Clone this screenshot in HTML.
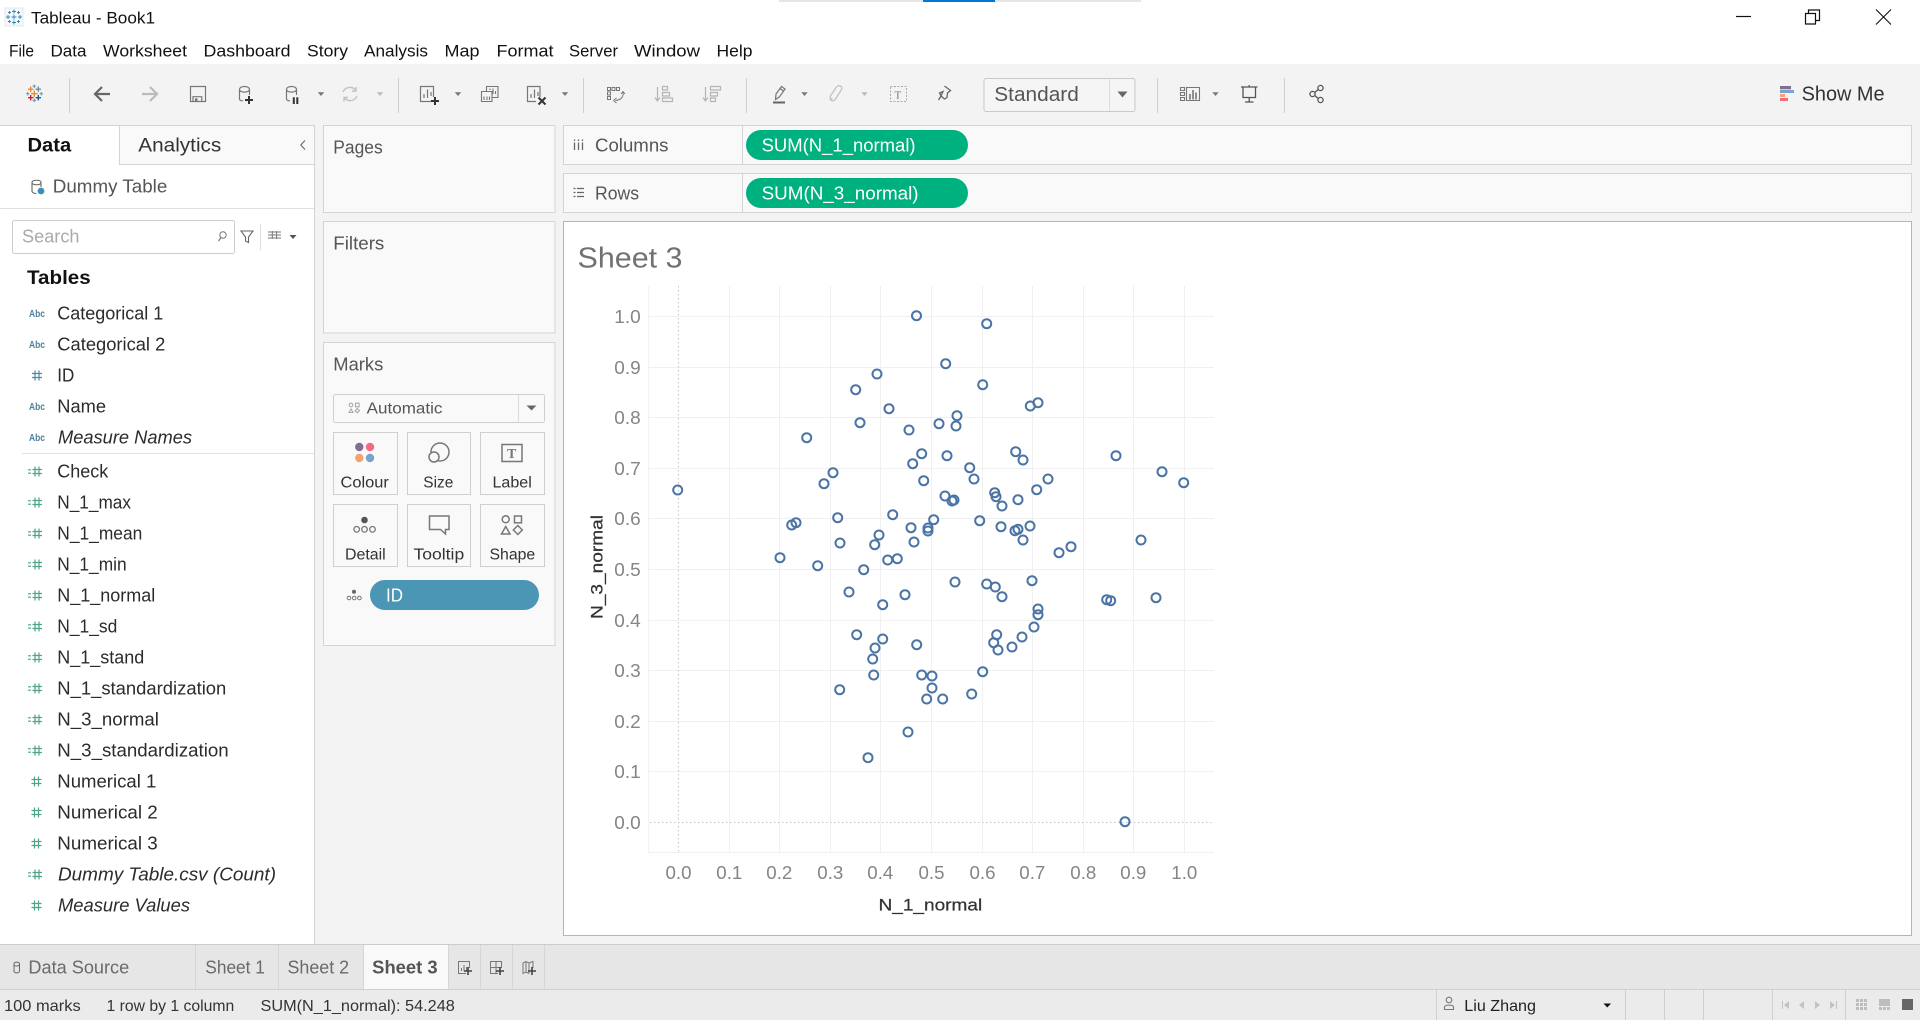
<!DOCTYPE html>
<html lang="en">
<head>
<meta charset="utf-8">
<title>Tableau - Book1</title>
<style>
html,body{margin:0;padding:0;width:1920px;height:1020px;overflow:hidden;background:#f3f3f3}
svg{display:block}
text{font-family:"Liberation Sans",Arial,sans-serif;white-space:pre}
.m{font-size:17px;fill:#111}
.f{font-size:18px;fill:#2b2b2b}
.s{font-size:18px;fill:#555}
.c{font-size:15.5px;fill:#333}
.a{font-size:10.5px;font-weight:bold;fill:#4f7f99}
.t{font-size:18px;fill:#858585}
.st{font-size:16px;fill:#333}
.w{font-size:18px;fill:#fff}
.tab{font-size:18px;fill:#6a6a6a}
.g line{stroke:#f0f0f0;stroke-width:1}
.mk circle{fill:none;stroke:#4a74a5;stroke-width:2;r:4.5px}
</style>
</head>
<body>
<svg width="1920" height="1020" viewBox="0 0 1920 1020" xmlns="http://www.w3.org/2000/svg">
<defs>
<g id="dim"><path d="M4.500 -5V5M8.500 -5V5M1.500 -2H11.500M1.500 2H11.500" fill="none" stroke="#4a8aa6" stroke-width="1.200"/></g>
<g id="mea"><path d="M0 -1.700H3M0 1.700H3" fill="none" stroke="#4fa38a" stroke-width="1.100"/><path d="M7 -5V5M11 -5V5M4.500 -2H14M4.500 2H14" fill="none" stroke="#4fa38a" stroke-width="1.200"/></g>
<g id="hash"><path d="M4.500 -5V5M8.500 -5V5M1.500 -2H11.500M1.500 2H11.500" fill="none" stroke="#4fa38a" stroke-width="1.200"/></g>
<path id="dn" d="M-3.200 -1.800H3.200L0 2Z" fill="#777"/>
</defs>

<!-- title bar -->
<rect width="1920" height="64" fill="#fff"/>
<rect x="779" y="0" width="362" height="2" fill="#e6e6e6"/>
<rect x="923" y="0" width="72" height="2" fill="#0078d7"/>
<rect x="5" y="8" width="18" height="18" fill="#f4f8fb" stroke="#e3e7ea" stroke-width="1"/>
<path d="M14 9.500v4M12 11.500h4M14 20.500v4M12 22.500h4M8 15v4M6 17h4M20 15v4M18 17h4M14 14.500v5M11.500 17h5M9.500 11v3M8 12.500h3M18.500 11v3M17 12.500h3M9.500 20v3M8 21.500h3M18.500 20v3M17 21.500h3" stroke="#3c87b4" stroke-width="1" fill="none"/>
<text x="31" y="23.500" font-size="17" fill="#111" textLength="124" lengthAdjust="spacingAndGlyphs">Tableau - Book1</text>
<text class="m" x="9" y="56.500" textLength="25" lengthAdjust="spacingAndGlyphs">File</text>
<text class="m" x="50.500" y="56.500" textLength="36" lengthAdjust="spacingAndGlyphs">Data</text>
<text class="m" x="103" y="56.500" textLength="84" lengthAdjust="spacingAndGlyphs">Worksheet</text>
<text class="m" x="203.500" y="56.500" textLength="87" lengthAdjust="spacingAndGlyphs">Dashboard</text>
<text class="m" x="307" y="56.500" textLength="41" lengthAdjust="spacingAndGlyphs">Story</text>
<text class="m" x="364" y="56.500" textLength="64" lengthAdjust="spacingAndGlyphs">Analysis</text>
<text class="m" x="444.500" y="56.500" textLength="35" lengthAdjust="spacingAndGlyphs">Map</text>
<text class="m" x="496.500" y="56.500" textLength="57" lengthAdjust="spacingAndGlyphs">Format</text>
<text class="m" x="569" y="56.500" textLength="49" lengthAdjust="spacingAndGlyphs">Server</text>
<text class="m" x="634" y="56.500" textLength="66" lengthAdjust="spacingAndGlyphs">Window</text>
<text class="m" x="716.500" y="56.500" textLength="36" lengthAdjust="spacingAndGlyphs">Help</text>
<path d="M1736 16.500H1751" stroke="#111" stroke-width="1.200"/>
<path d="M1805.500 13.500H1815.500V24H1805.500ZM1808.500 13.500V10H1819.500V20.500H1815.500" fill="none" stroke="#111" stroke-width="1.200"/>
<path d="M1876 9.500L1891 24.500M1891 9.500L1876 24.500" stroke="#111" stroke-width="1.100"/>

<!-- toolbar -->
<rect y="64" width="1920" height="62" fill="#f3f3f3"/>
<g fill="none" stroke-width="1.200">
<path d="M34.300 84.500v3.500M32.500 86.200h3.600M27.700 92v3.500M26 93.700h3.500M41.300 92v3.500M39.500 93.700h3.500M34.300 98.700v3.500M32.500 100.400h3.600" stroke="#7b9fb5"/>
<path d="M30.700 86.500v5.400M28 89.200h5.400" stroke="#ee8c2b" stroke-width="1.400"/>
<path d="M38.300 86.500v5.400M35.600 89.200h5.400" stroke="#5b95a6" stroke-width="1.400"/>
<path d="M34.300 90.500v6.500M31 93.700h6.600" stroke="#ee8c2b" stroke-width="1.400"/>
<path d="M30.700 95v5.400M28 97.700h5.400" stroke="#c8203f" stroke-width="1.400"/>
<path d="M38.300 95v5.400M35.600 97.700h5.400" stroke="#1f5a96" stroke-width="1.400"/>
</g>
<path d="M69.500 78V113M398.500 78V113M583.500 78V113M746.500 78V113M1157.500 78V113M1284.500 78V113" stroke="#d0d0d0" stroke-width="1"/>
<path d="M110 94H95.500M102 87L95 94L102 101" fill="none" stroke="#666" stroke-width="2.200"/>
<path d="M142 94H157M150 87L157 94L150 101" fill="none" stroke="#bbb" stroke-width="2.200"/>
<path d="M190.500 86.500H205.500V101.500H190.500ZM193 101.500V96.700H201.700V101.500" fill="none" stroke="#777" stroke-width="1.200"/>
<rect x="195" y="98.300" width="2.500" height="3.200" fill="#777"/>
<g fill="none" stroke="#777" stroke-width="1.200">
<path d="M239.500 89.500C239.500 85.500 249.500 85.500 249.500 89.500C249.500 93 239.500 93 239.500 89.500V99C239.500 100.200 241 100.800 243 100.800M249.500 89.500V95"/>
<path d="M286.500 89.500C286.500 85.500 296.500 85.500 296.500 89.500C296.500 93 286.500 93 286.500 89.500V99C286.500 100.200 288 100.800 290 100.800M296.500 89.500V95"/>
</g>
<path d="M249 96V104M245 100H253" stroke="#333" stroke-width="2" fill="none"/>
<path d="M293.800 97.300V104M297.300 97.300V104" stroke="#333" stroke-width="2" fill="none"/>
<use href="#dn" x="321" y="94"/>
<path d="M343 92A7.500 7.500 0 0 1 356 90.500M356 87V91H352M357 96A7.500 7.500 0 0 1 344 97.500M344 101.500V97.500H348" fill="none" stroke="#c2c2c2" stroke-width="1.400"/>
<path d="M-3.200 -1.800H3.200L0 2Z" transform="translate(380,94)" fill="#bbb"/>
<g fill="none" stroke="#777" stroke-width="1.200">
<path d="M433.500 97V86.500H420.500V101.500H431"/>
<path d="M424 98V94M427.500 98V89.500M431 96V92"/>
</g>
<path d="M435 97V105M431 101H439" stroke="#333" stroke-width="2" fill="none"/>
<use href="#dn" x="458" y="94"/>
<g fill="none" stroke="#777" stroke-width="1.100">
<path d="M486.500 91V86.500H498V97.500H492"/>
<path d="M481.500 91.500H492V101.500H481.500Z"/>
<path d="M490 90V88.500M493 94V88.500M495.500 94V91M484 100V96.500M487 100V96.500M489.500 100V96.500"/>
</g>
<g fill="none" stroke="#777" stroke-width="1.200">
<path d="M540 97V86.500H527.500V101.500H536"/>
<path d="M531 98V94M534.500 98V89.500M538 96V92"/>
</g>
<path d="M538.500 97.500L545.500 104.500M545.500 97.500L538.500 104.500" stroke="#333" stroke-width="2" fill="none"/>
<use href="#dn" x="565" y="94"/>
<g fill="none" stroke="#777" stroke-width="1">
<path d="M607.500 87.500h3v3h-3zM612 87.500h3v3h-3zM616.500 87.500h3v3h-3zM607.500 92h3v3h-3zM607.500 96.500h3v3h-3z"/>
<path d="M623 92C624 96.500 621 100 615.500 100.500M613.500 100.500L616.500 98M613.500 100.500L616.500 103M621 94L623 91.500L625 94"/>
</g>
<g fill="none" stroke="#b5b5b5" stroke-width="1.200">
<path d="M657.500 87V100M655 97.500L657.500 101L660 97.500" />
<path d="M662.500 86.500h5v3.500h-5zM662.500 92.500h7v3.500h-7zM662.500 98h10v3.500h-10z"/>
<path d="M705.500 87V100M703 97.500L705.500 101L708 97.500"/>
<path d="M710.500 86.500h10v3.500h-10zM710.500 92.500h7v3.500h-7zM710.500 98h5v3.500h-5z"/>
</g>
<path d="M776 94L781.500 86.500L785 89L779.500 96.800L775.500 99.500ZM780 88.500L783.500 91" fill="none" stroke="#777" stroke-width="1.200"/>
<rect x="773" y="101.500" width="12" height="2" fill="#666"/>
<use href="#dn" x="804.500" y="94"/>
<path d="M832.500 98C830 101 829.500 98 831 95L836.500 87C838.500 84.500 843 86 841.500 89.500L835.500 99C833.500 102 830 101 830.500 98" fill="none" stroke="#c2c2c2" stroke-width="1.300"/>
<path d="M-3.200 -1.800H3.200L0 2Z" transform="translate(864.500,94)" fill="#bbb"/>
<rect x="890.500" y="86.500" width="16" height="15" fill="none" stroke="#aaa" stroke-width="1" stroke-dasharray="2 1.500"/>
<text x="894.500" y="98.500" font-size="11" fill="#777" style="font-family:'Liberation Serif',serif">T</text>
<path d="M944.500 86L950.500 90.500L947.500 93L947 97.500L944.500 99L941 96L938.500 100M941 96L939.500 93L943 91.500Z" fill="none" stroke="#666" stroke-width="1.300"/>
<rect x="984" y="78.500" width="151" height="33" rx="2" fill="#f5f5f5" stroke="#c9c9c9"/>
<path d="M1109.500 79V111" stroke="#dcdcdc"/>
<path d="M1117.500 91.500H1127.500L1122.500 97.500Z" fill="#666"/>
<text x="994.300" y="101" font-size="20" fill="#555" textLength="84.500" lengthAdjust="spacingAndGlyphs">Standard</text>
<g fill="none" stroke="#777" stroke-width="1.100">
<path d="M1180.500 87.500h4v3h-4zM1180.500 92.500h4v3h-4zM1180.500 97.500h4v3h-4zM1186.500 87.500h13v13h-13z"/>
</g>
<path d="M1190 99.500V94M1193 99.500V90M1196 99.500V92.500" stroke="#666" stroke-width="1.400" fill="none"/>
<use href="#dn" x="1215.500" y="94"/>
<path d="M1241 87H1257.500M1243 87V97.500H1255.500V87M1249.200 97.500V102M1245 102H1253.500M1249.200 85V87" fill="none" stroke="#555" stroke-width="1.300"/>
<g fill="none" stroke="#555" stroke-width="1.300">
<circle cx="1320.500" cy="88" r="2.600"/><circle cx="1312.500" cy="94" r="2.600"/><circle cx="1320.500" cy="100" r="2.600"/>
<path d="M1318.300 89.500L1314.700 92.500M1314.700 95.500L1318.300 98.500"/>
</g>
<rect x="1780" y="86" width="11" height="3.300" fill="#826d93"/>
<rect x="1780" y="90" width="14" height="3" fill="#7ba2cc"/>
<rect x="1780" y="94" width="5" height="3" fill="#f2a372"/>
<rect x="1780" y="98" width="8" height="3" fill="#f56a7e"/>
<text x="1801.600" y="100.500" font-size="20" fill="#333" textLength="83" lengthAdjust="spacingAndGlyphs">Show Me</text>

<!-- left data pane -->
<rect x="0" y="125" width="314" height="820" fill="#fff"/>
<rect x="120" y="125" width="194" height="40" fill="#f9f9f9"/>
<path d="M0 125.500H314.500V945M119.500 125V164.500H314" fill="none" stroke="#d4d4d4"/>
<text x="27.500" y="151.500" font-size="19" font-weight="bold" fill="#111" textLength="43.700" lengthAdjust="spacingAndGlyphs">Data</text>
<text x="138.300" y="151.500" font-size="19" fill="#333" textLength="83" lengthAdjust="spacingAndGlyphs">Analytics</text>
<path d="M305 140.500L300.800 145L305 149.500" fill="none" stroke="#666" stroke-width="1.100"/>
<path d="M32 182.500C32 179.500 41 179.500 41 182.500C41 185.500 32 185.500 32 182.500V191C32 192.500 34 193.500 36.500 193.500M41 182.500V187" fill="none" stroke="#666" stroke-width="1.100"/>
<circle cx="41" cy="191" r="3.400" fill="#3d8fb8"/>
<text x="52.800" y="192.500" style="font-size:18px;fill:#555" textLength="114.500" lengthAdjust="spacingAndGlyphs">Dummy Table</text>
<path d="M0 208.500H314" stroke="#e0e0e0"/>
<rect x="12.500" y="220.500" width="222" height="33" rx="2" fill="#fff" stroke="#ccc"/>
<text x="22" y="242.500" font-size="18" fill="#aaa" textLength="57.500" lengthAdjust="spacingAndGlyphs">Search</text>
<circle cx="223" cy="235" r="3.200" fill="none" stroke="#777"/>
<path d="M221 237.500L218.500 241" stroke="#777" stroke-width="1.200"/>
<path d="M241 231H253L248.500 237V242.500L245.500 241V237Z" fill="none" stroke="#666" stroke-width="1.100"/>
<path d="M260.500 224V250" stroke="#ddd"/>
<path d="M268 232h13M268 235h13M268 238h13M272.300 231v8M276.600 231v8" stroke="#777" stroke-width="1" fill="none"/>
<path d="M289.500 235H296.500L293 239Z" fill="#555"/>
<text x="27" y="284" font-size="19" font-weight="bold" fill="#111" textLength="63.700" lengthAdjust="spacingAndGlyphs">Tables</text>

<text class="a" x="29" y="317" textLength="16" lengthAdjust="spacingAndGlyphs">Abc</text>
<text class="f" x="57.300" y="319.500" textLength="106" lengthAdjust="spacingAndGlyphs">Categorical 1</text>
<text class="a" x="29" y="348" textLength="16" lengthAdjust="spacingAndGlyphs">Abc</text>
<text class="f" x="57.300" y="350.500" textLength="108" lengthAdjust="spacingAndGlyphs">Categorical 2</text>
<use href="#dim" x="30.500" y="375.500"/>
<text class="f" x="57.300" y="381.500" textLength="17" lengthAdjust="spacingAndGlyphs">ID</text>
<text class="a" x="29" y="410" textLength="16" lengthAdjust="spacingAndGlyphs">Abc</text>
<text class="f" x="57.300" y="412.500" textLength="48.700" lengthAdjust="spacingAndGlyphs">Name</text>
<text class="a" x="29" y="441" textLength="16" lengthAdjust="spacingAndGlyphs">Abc</text>
<text class="f" x="58" y="443.500" font-style="italic" textLength="134" lengthAdjust="spacingAndGlyphs">Measure Names</text>
<path d="M22 453.500H314" stroke="#e0e0e0"/>
<use href="#mea" x="28" y="471.500"/>
<text class="f" x="57.300" y="477.500" textLength="51" lengthAdjust="spacingAndGlyphs">Check</text>
<use href="#mea" x="28" y="502.500"/>
<text class="f" x="57.300" y="508.500" textLength="73.700" lengthAdjust="spacingAndGlyphs">N_1_max</text>
<use href="#mea" x="28" y="533.500"/>
<text class="f" x="57.300" y="539.500" textLength="85" lengthAdjust="spacingAndGlyphs">N_1_mean</text>
<use href="#mea" x="28" y="564.500"/>
<text class="f" x="57.300" y="570.500" textLength="69.300" lengthAdjust="spacingAndGlyphs">N_1_min</text>
<use href="#mea" x="28" y="595.500"/>
<text class="f" x="57.300" y="601.500" textLength="98" lengthAdjust="spacingAndGlyphs">N_1_normal</text>
<use href="#mea" x="28" y="626.500"/>
<text class="f" x="57.300" y="632.500" textLength="60" lengthAdjust="spacingAndGlyphs">N_1_sd</text>
<use href="#mea" x="28" y="657.500"/>
<text class="f" x="57.300" y="663.500" textLength="87" lengthAdjust="spacingAndGlyphs">N_1_stand</text>
<use href="#mea" x="28" y="688.500"/>
<text class="f" x="57.300" y="694.500" textLength="169" lengthAdjust="spacingAndGlyphs">N_1_standardization</text>
<use href="#mea" x="28" y="719.500"/>
<text class="f" x="57.300" y="725.500" textLength="101.600" lengthAdjust="spacingAndGlyphs">N_3_normal</text>
<use href="#mea" x="28" y="750.500"/>
<text class="f" x="57.300" y="756.500" textLength="171.400" lengthAdjust="spacingAndGlyphs">N_3_standardization</text>
<use href="#hash" x="30" y="781.500"/>
<text class="f" x="57.300" y="787.500" textLength="99" lengthAdjust="spacingAndGlyphs">Numerical 1</text>
<use href="#hash" x="30" y="812.500"/>
<text class="f" x="57.300" y="818.500" textLength="100.400" lengthAdjust="spacingAndGlyphs">Numerical 2</text>
<use href="#hash" x="30" y="843.500"/>
<text class="f" x="57.300" y="849.500" textLength="100.400" lengthAdjust="spacingAndGlyphs">Numerical 3</text>
<use href="#mea" x="28" y="874.500"/>
<text class="f" x="58" y="880.500" font-style="italic" textLength="218" lengthAdjust="spacingAndGlyphs">Dummy Table.csv (Count)</text>
<use href="#hash" x="30" y="905.500"/>
<text class="f" x="58" y="911.500" font-style="italic" textLength="132" lengthAdjust="spacingAndGlyphs">Measure Values</text>

<!-- pages / filters / marks -->
<rect x="323.500" y="125.500" width="231.500" height="87" fill="#f9f9f9" stroke="#d4d4d4"/>
<text class="s" x="333.300" y="153.500" textLength="49.400" lengthAdjust="spacingAndGlyphs">Pages</text>
<rect x="323.500" y="221.500" width="231.500" height="111.500" fill="#f9f9f9" stroke="#d4d4d4"/>
<text class="s" x="333.300" y="249.500" textLength="51" lengthAdjust="spacingAndGlyphs">Filters</text>
<rect x="323.500" y="342.500" width="231.500" height="303" fill="#f9f9f9" stroke="#d4d4d4"/>
<text class="s" x="333.300" y="370.500" textLength="50" lengthAdjust="spacingAndGlyphs">Marks</text>
<rect x="333.500" y="394.500" width="211" height="28" rx="2" fill="#f9f9f9" stroke="#cfcfcf"/>
<path d="M518.500 395V422" stroke="#dcdcdc"/>
<path d="M526.500 405.500H536.500L531.500 410.500Z" fill="#666"/>
<g fill="none" stroke="#aaa" stroke-width="1.100">
<circle cx="351" cy="405" r="1.800"/><rect x="355.500" y="403.200" width="3.600" height="3.600"/>
<path d="M351 409L353 412.500H349ZM357.300 408.500L359.500 410.700L357.300 412.900L355.100 410.700Z"/>
</g>
<text x="366.700" y="413.500" font-size="15.500" fill="#555" textLength="75.700" lengthAdjust="spacingAndGlyphs">Automatic</text>

<g fill="#f9f9f9" stroke="#cfcfcf">
<rect x="333.500" y="432.500" width="64" height="62"/><rect x="407.500" y="432.500" width="63" height="62"/><rect x="480.500" y="432.500" width="64" height="62"/>
<rect x="333.500" y="504.500" width="64" height="62"/><rect x="407.500" y="504.500" width="63" height="62"/><rect x="480.500" y="504.500" width="64" height="62"/>
</g>
<circle cx="359.300" cy="447" r="4.200" fill="#826d93"/><circle cx="370" cy="447" r="4.200" fill="#f56a7e"/>
<circle cx="359.300" cy="458" r="4.200" fill="#f2a372"/><circle cx="370" cy="458" r="4.200" fill="#7ba2cc"/>
<text class="c" x="340.500" y="487.500" textLength="48.300" lengthAdjust="spacingAndGlyphs">Colour</text>
<circle cx="440" cy="452" r="9" fill="none" stroke="#777" stroke-width="1.500"/>
<circle cx="434" cy="457" r="5" fill="#f9f9f9" stroke="#777" stroke-width="1.500"/>
<text class="c" x="423.300" y="487.500" textLength="30" lengthAdjust="spacingAndGlyphs">Size</text>
<rect x="502" y="444.500" width="20" height="17" fill="none" stroke="#777" stroke-width="1.500"/>
<text x="507" y="458" font-size="14" font-weight="bold" fill="#777" style="font-family:'Liberation Serif',serif">T</text>
<text class="c" x="492.500" y="487.500" textLength="39.300" lengthAdjust="spacingAndGlyphs">Label</text>
<circle cx="364.500" cy="520" r="3.300" fill="#555"/>
<g fill="none" stroke="#777" stroke-width="1.300"><circle cx="356.700" cy="529.300" r="2.800"/><circle cx="364.500" cy="529.300" r="2.800"/><circle cx="372.500" cy="529.300" r="2.800"/></g>
<text class="c" x="345" y="559.500" textLength="40.700" lengthAdjust="spacingAndGlyphs">Detail</text>
<path d="M429.500 516H449V529.500H445.500V534L440.500 529.500H429.500Z" fill="none" stroke="#777" stroke-width="1.500"/>
<text class="c" x="413.500" y="559.500" textLength="50.700" lengthAdjust="spacingAndGlyphs">Tooltip</text>
<g fill="none" stroke="#777" stroke-width="1.500">
<circle cx="505.700" cy="519.300" r="3.500"/><rect x="514.500" y="516" width="7" height="6.800"/>
<path d="M505.700 526.500L510 534H501.500ZM517.800 525.500L522.300 530L517.800 534.500L513.300 530Z"/>
</g>
<text class="c" x="489.500" y="559.500" textLength="45.700" lengthAdjust="spacingAndGlyphs">Shape</text>
<circle cx="354" cy="591.700" r="2" fill="#666"/>
<g fill="none" stroke="#777" stroke-width="1"><circle cx="349" cy="598" r="1.800"/><circle cx="354.200" cy="598" r="1.800"/><circle cx="359.400" cy="598" r="1.800"/></g>
<rect x="370" y="580" width="169" height="30" rx="15" fill="#4b96b4"/>
<text class="w" x="386" y="601.500" textLength="17" lengthAdjust="spacingAndGlyphs">ID</text>

<!-- shelves -->
<rect x="563.500" y="125.500" width="1348" height="39" fill="#f9f9f9" stroke="#d4d4d4"/>
<path d="M742.500 126V164" stroke="#d4d4d4"/>
<path d="M574.500 142.500V150M578.500 142.500V150M582.500 142.500V150" stroke="#666" stroke-width="1.300"/>
<path d="M574.500 139.500V141M578.500 139.500V141M582.500 139.500V141" stroke="#666" stroke-width="1.300"/>
<text class="s" x="595" y="151.500" textLength="73.500" lengthAdjust="spacingAndGlyphs">Columns</text>
<rect x="746" y="130" width="222" height="30" rx="15" fill="#00b180"/>
<text class="w" x="761.600" y="151.500" textLength="154" lengthAdjust="spacingAndGlyphs">SUM(N_1_normal)</text>
<rect x="563.500" y="173.500" width="1348" height="39" fill="#f9f9f9" stroke="#d4d4d4"/>
<path d="M742.500 174V212" stroke="#d4d4d4"/>
<path d="M573.500 188.500h2M577 188.500h7M573.500 192.500h2M577 192.500h7M573.500 196.500h2M577 196.500h7" stroke="#666" stroke-width="1.300"/>
<text class="s" x="595" y="199.500" textLength="44" lengthAdjust="spacingAndGlyphs">Rows</text>
<rect x="746" y="178" width="222" height="30" rx="15" fill="#00b180"/>
<text class="w" x="761.600" y="199.500" textLength="157" lengthAdjust="spacingAndGlyphs">SUM(N_3_normal)</text>

<!-- view -->
<rect x="563.500" y="221.500" width="1348" height="714" fill="#fff" stroke="#b5b5b5"/>
<text x="577.500" y="267.500" font-size="29" fill="#727272" textLength="105" lengthAdjust="spacingAndGlyphs">Sheet 3</text>

<g class="g">
<line x1="648.700" y1="286" x2="648.700" y2="853"/>
<line x1="729.500" y1="286" x2="729.500" y2="853"/><line x1="779.500" y1="286" x2="779.500" y2="853"/><line x1="830.500" y1="286" x2="830.500" y2="853"/><line x1="880.500" y1="286" x2="880.500" y2="853"/><line x1="931.500" y1="286" x2="931.500" y2="853"/><line x1="982.500" y1="286" x2="982.500" y2="853"/><line x1="1032.500" y1="286" x2="1032.500" y2="853"/><line x1="1083.500" y1="286" x2="1083.500" y2="853"/><line x1="1133.500" y1="286" x2="1133.500" y2="853"/><line x1="1184.500" y1="286" x2="1184.500" y2="853"/>
<line x1="648" y1="316.500" x2="1214" y2="316.500"/><line x1="648" y1="367.500" x2="1214" y2="367.500"/><line x1="648" y1="417.500" x2="1214" y2="417.500"/><line x1="648" y1="468.500" x2="1214" y2="468.500"/><line x1="648" y1="518.500" x2="1214" y2="518.500"/><line x1="648" y1="569.500" x2="1214" y2="569.500"/><line x1="648" y1="620.500" x2="1214" y2="620.500"/><line x1="648" y1="670.500" x2="1214" y2="670.500"/><line x1="648" y1="721.500" x2="1214" y2="721.500"/><line x1="648" y1="771.500" x2="1214" y2="771.500"/>
<line x1="648" y1="852.500" x2="1214" y2="852.500"/>
</g>
<path d="M678.500 286V853M650 822.500H1214" stroke="#c4c4c4" stroke-width="1" stroke-dasharray="1.500 2.500" fill="none"/>

<g>
<text class="t" x="614.300" y="322.800" textLength="26.400" lengthAdjust="spacingAndGlyphs">1.0</text>
<text class="t" x="614.300" y="373.800" textLength="26.400" lengthAdjust="spacingAndGlyphs">0.9</text>
<text class="t" x="614.300" y="423.800" textLength="26.400" lengthAdjust="spacingAndGlyphs">0.8</text>
<text class="t" x="614.300" y="474.800" textLength="26.400" lengthAdjust="spacingAndGlyphs">0.7</text>
<text class="t" x="614.300" y="524.800" textLength="26.400" lengthAdjust="spacingAndGlyphs">0.6</text>
<text class="t" x="614.300" y="575.800" textLength="26.400" lengthAdjust="spacingAndGlyphs">0.5</text>
<text class="t" x="614.300" y="626.800" textLength="26.400" lengthAdjust="spacingAndGlyphs">0.4</text>
<text class="t" x="614.300" y="676.800" textLength="26.400" lengthAdjust="spacingAndGlyphs">0.3</text>
<text class="t" x="614.300" y="727.800" textLength="26.400" lengthAdjust="spacingAndGlyphs">0.2</text>
<text class="t" x="614.300" y="777.800" textLength="26.400" lengthAdjust="spacingAndGlyphs">0.1</text>
<text class="t" x="614.300" y="828.800" textLength="26.400" lengthAdjust="spacingAndGlyphs">0.0</text>
<text class="t" x="665.500" y="878.800" textLength="26" lengthAdjust="spacingAndGlyphs">0.0</text>
<text class="t" x="716.300" y="878.800" textLength="26" lengthAdjust="spacingAndGlyphs">0.1</text>
<text class="t" x="766.300" y="878.800" textLength="26" lengthAdjust="spacingAndGlyphs">0.2</text>
<text class="t" x="817.300" y="878.800" textLength="26" lengthAdjust="spacingAndGlyphs">0.3</text>
<text class="t" x="867.300" y="878.800" textLength="26" lengthAdjust="spacingAndGlyphs">0.4</text>
<text class="t" x="918.500" y="878.800" textLength="26" lengthAdjust="spacingAndGlyphs">0.5</text>
<text class="t" x="969.500" y="878.800" textLength="26" lengthAdjust="spacingAndGlyphs">0.6</text>
<text class="t" x="1019.300" y="878.800" textLength="26" lengthAdjust="spacingAndGlyphs">0.7</text>
<text class="t" x="1070.300" y="878.800" textLength="26" lengthAdjust="spacingAndGlyphs">0.8</text>
<text class="t" x="1120.300" y="878.800" textLength="26" lengthAdjust="spacingAndGlyphs">0.9</text>
<text class="t" x="1171.300" y="878.800" textLength="26" lengthAdjust="spacingAndGlyphs">1.0</text>
</g>
<text x="878.500" y="910.500" font-size="17" fill="#333" stroke="#333" stroke-width=".25" textLength="103.700" lengthAdjust="spacingAndGlyphs">N_1_normal</text>
<text transform="translate(602.500,619) rotate(-90)" x="0" y="0" font-size="17" fill="#333" stroke="#333" stroke-width=".25" textLength="104" lengthAdjust="spacingAndGlyphs">N_3_normal</text>

<g class="mk">
<circle cx="677.700" cy="490"/><circle cx="806.700" cy="437.700"/><circle cx="855.700" cy="389.700"/><circle cx="877" cy="374"/><circle cx="889" cy="408.700"/><circle cx="860" cy="422.700"/><circle cx="909" cy="430"/><circle cx="916.500" cy="315.700"/><circle cx="912.700" cy="463.700"/><circle cx="921.700" cy="453.700"/><circle cx="833" cy="472.700"/><circle cx="824" cy="483.700"/><circle cx="923.700" cy="480.700"/><circle cx="837.700" cy="517.700"/><circle cx="892.700" cy="514.700"/><circle cx="796" cy="522.700"/><circle cx="791.700" cy="525"/><circle cx="879" cy="535"/><circle cx="874.700" cy="544.700"/><circle cx="911" cy="527.700"/><circle cx="840" cy="543"/><circle cx="914" cy="542"/><circle cx="887.700" cy="560"/><circle cx="897.300" cy="558.700"/><circle cx="780" cy="557.700"/><circle cx="817.700" cy="565.700"/><circle cx="863.700" cy="569.700"/><circle cx="849" cy="592"/><circle cx="905" cy="594.700"/><circle cx="882.700" cy="604.700"/>
<circle cx="986.700" cy="323.700"/><circle cx="945.700" cy="363.700"/><circle cx="982.700" cy="384.700"/><circle cx="1030.300" cy="406"/><circle cx="1038" cy="402.700"/><circle cx="957" cy="415.700"/><circle cx="939" cy="423.700"/><circle cx="956" cy="426"/><circle cx="947" cy="455.700"/><circle cx="1015.700" cy="451.700"/><circle cx="1023" cy="460"/><circle cx="1116" cy="455.700"/><circle cx="1162" cy="471.700"/><circle cx="1183.700" cy="482.700"/><circle cx="969.700" cy="467.700"/><circle cx="974" cy="479"/><circle cx="1048" cy="479"/><circle cx="1036.700" cy="489.700"/><circle cx="945" cy="496"/><circle cx="952" cy="501"/><circle cx="954" cy="500"/><circle cx="994.700" cy="492.700"/><circle cx="996" cy="496.700"/><circle cx="1002" cy="506"/><circle cx="1018" cy="499.700"/><circle cx="933.700" cy="519.700"/><circle cx="979.700" cy="520.700"/><circle cx="928" cy="528"/><circle cx="928" cy="531"/><circle cx="1001" cy="526.700"/><circle cx="1015" cy="530.700"/><circle cx="1018" cy="529.300"/><circle cx="1030" cy="526"/><circle cx="1023" cy="540"/><circle cx="1071" cy="546.700"/><circle cx="1059" cy="552.700"/><circle cx="1141" cy="540"/><circle cx="955" cy="582"/><circle cx="986.700" cy="584"/><circle cx="995.300" cy="587"/><circle cx="1032" cy="580.700"/><circle cx="1002" cy="596.700"/><circle cx="1038" cy="609"/><circle cx="1038" cy="614.700"/><circle cx="1106.700" cy="599.700"/><circle cx="1110.700" cy="600.700"/><circle cx="1156" cy="597.700"/>
<circle cx="856.700" cy="634.700"/><circle cx="882.700" cy="639"/><circle cx="875" cy="648"/><circle cx="872.700" cy="659"/><circle cx="873.700" cy="675"/><circle cx="839.700" cy="689.700"/><circle cx="916.700" cy="644.700"/><circle cx="921.700" cy="675"/><circle cx="908" cy="732"/><circle cx="868" cy="757.700"/><circle cx="996.700" cy="634.700"/><circle cx="993.700" cy="642.700"/><circle cx="998" cy="650"/><circle cx="1012" cy="647"/><circle cx="1022" cy="637"/><circle cx="1034" cy="627"/><circle cx="932" cy="676"/><circle cx="982.700" cy="671.700"/><circle cx="932" cy="688"/><circle cx="926.700" cy="699"/><circle cx="942.700" cy="699"/><circle cx="971.700" cy="694"/><circle cx="1125" cy="821.700"/>
</g>

<!-- tabs -->
<rect y="944" width="1920" height="45" fill="#e6e6e6"/>
<path d="M0 944.500H1920" stroke="#ccc"/>
<path d="M314.500 926V944" stroke="#d4d4d4"/>
<rect x="363.500" y="945" width="85" height="44" fill="#f9f9f9"/>
<path d="M195.500 945V989M278.500 945V989M363.500 945V989M448.500 945V989M480.500 945V989M512.500 945V989M544.500 945V989" stroke="#d6d6d6"/>
<path d="M14 964C14 961.500 19.500 961.500 19.500 964V971C19.500 973.500 14 973.500 14 971ZM14 964.500C14 966.500 19.500 966.500 19.500 964.500" fill="none" stroke="#666"/>
<text class="tab" x="28.400" y="973.500" textLength="100.800" lengthAdjust="spacingAndGlyphs">Data Source</text>
<text class="tab" x="205.300" y="973.500" textLength="59.600" lengthAdjust="spacingAndGlyphs">Sheet 1</text>
<text class="tab" x="287.500" y="973.500" textLength="61.600" lengthAdjust="spacingAndGlyphs">Sheet 2</text>
<text x="372.200" y="973.500" font-size="18" font-weight="bold" fill="#555" textLength="65.400" lengthAdjust="spacingAndGlyphs">Sheet 3</text>
<g fill="none" stroke="#777" stroke-width="1">
<path d="M469.500 968V961.500H458.500V973.500H466M461.500 971V968M464 971V965M466.500 971V967"/>
<path d="M501.500 968V961.500H490.500V973.500H498M490.500 967.500H501.500M496 961.500V973.500"/>
<path d="M533 968V961.500L529 963L526 961.500L523 963V973.500L526 972L529 973.500M526 961.500V972M529 963V973.500"/>
</g>
<path d="M468 967V975M464 971H472M500 967V975M496 971H504M532 967V975M528 971H536" stroke="#444" stroke-width="1.600"/>

<!-- status -->
<rect y="989" width="1920" height="31" fill="#ebebeb"/>
<path d="M0 989.500H1920" stroke="#d0d0d0"/>
<text class="st" x="4" y="1011" textLength="76.700" lengthAdjust="spacingAndGlyphs">100 marks</text>
<text class="st" x="106.500" y="1011" textLength="127.700" lengthAdjust="spacingAndGlyphs">1 row by 1 column</text>
<text class="st" x="260.500" y="1011" textLength="194.300" lengthAdjust="spacingAndGlyphs">SUM(N_1_normal): 54.248</text>
<path d="M1436.500 990V1020M1625.500 990V1020M1664.500 990V1020M1703.500 990V1020M1772.500 990V1020M1845.500 990V1020" stroke="#cfcfcf"/>
<circle cx="1449" cy="1000" r="2.800" fill="none" stroke="#777" stroke-width="1.100"/>
<path d="M1444.500 1009.500V1007C1444.500 1004.500 1453.500 1004.500 1453.500 1007V1009.500Z" fill="none" stroke="#777" stroke-width="1.100"/>
<text x="1464.300" y="1011" font-size="16" fill="#222" textLength="71.700" lengthAdjust="spacingAndGlyphs">Liu Zhang</text>
<path d="M1603.500 1003.500H1611L1607.300 1007.500Z" fill="#111"/>
<g fill="#c2c2c2">
<path d="M1782 1001H1783V1009H1782ZM1789 1001V1009L1784 1005Z"/>
<path d="M1804 1001V1009L1799 1005Z"/>
<path d="M1815 1001V1009L1820 1005Z"/>
<path d="M1830 1001V1009L1835 1005ZM1836 1001H1837V1009H1836Z"/>
</g>
<g fill="#bdbdbd">
<rect x="1856" y="999" width="3" height="3"/><rect x="1860" y="999" width="3" height="3"/><rect x="1864" y="999" width="3" height="3"/>
<rect x="1856" y="1003" width="3" height="3"/><rect x="1860" y="1003" width="3" height="3"/><rect x="1864" y="1003" width="3" height="3"/>
<rect x="1856" y="1007" width="3" height="3"/><rect x="1860" y="1007" width="3" height="3"/><rect x="1864" y="1007" width="3" height="3"/>
<rect x="1879" y="999" width="11" height="7"/>
<rect x="1879" y="1007" width="3" height="3"/><rect x="1883" y="1007" width="3" height="3"/><rect x="1887" y="1007" width="3" height="3"/>
</g>
<rect x="1902" y="999" width="11" height="11" fill="#666"/>
</svg>
</body>
</html>
